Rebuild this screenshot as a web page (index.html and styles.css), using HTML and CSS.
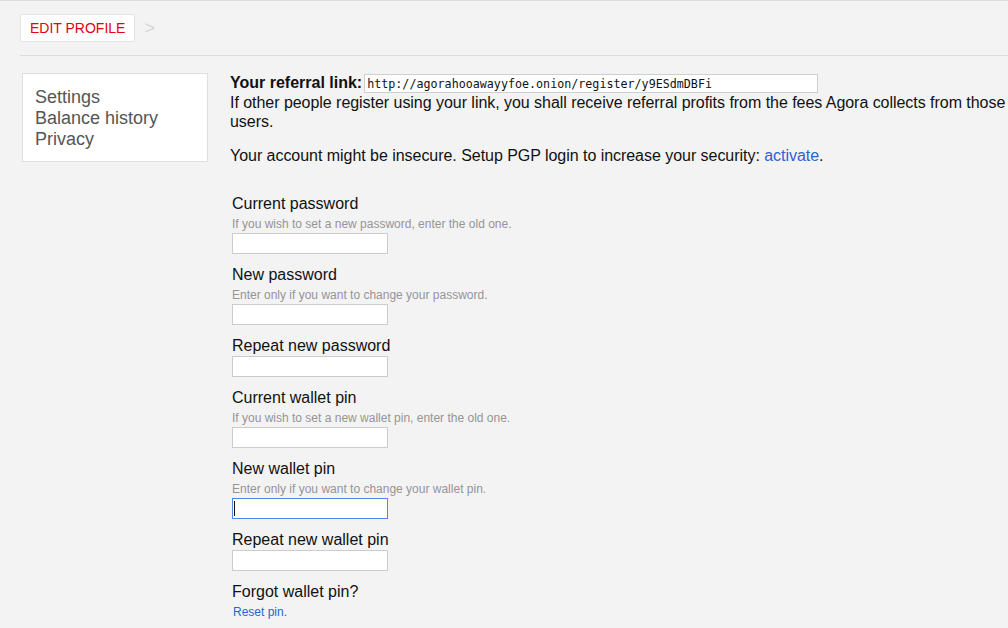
FILE: index.html
```html
<!DOCTYPE html>
<html lang="en">
<head>
<meta charset="utf-8">
<title>Edit profile</title>
<link rel="stylesheet" href="styles.css">
</head>
<body>
<div class="page">
  <div class="crumbs">
    <a class="crumb-btn" href="#">EDIT PROFILE</a>
    <span class="crumb-sep">&gt;</span>
  </div>
  <div class="rule"></div>
  <div class="layout">
    <nav class="sidenav">
      <a href="#">Settings</a>
      <a href="#">Balance history</a>
      <a href="#">Privacy</a>
    </nav>
    <main class="main">
      <div class="ref-row">
        <strong class="ref-label">Your referral link:</strong>
        <input class="ref-input" type="text" value="http://agorahooawayyfoe.onion/register/y9ESdmDBFi">
      </div>
      <p class="text">If other people register using your link, you shall receive referral profits from the fees Agora collects from those users.</p>
      <p class="text">Your account might be insecure. Setup PGP login to increase your security: <a class="link" href="#">activate</a>.</p>
      <form class="form">
        <div class="group">
          <div class="label">Current password</div>
          <div class="help">If you wish to set a new password, enter the old one.</div>
          <input class="field" type="password">
        </div>
        <div class="group">
          <div class="label">New password</div>
          <div class="help">Enter only if you want to change your password.</div>
          <input class="field" type="password">
        </div>
        <div class="group">
          <div class="label">Repeat new password</div>
          <input class="field" type="password">
        </div>
        <div class="group">
          <div class="label">Current wallet pin</div>
          <div class="help">If you wish to set a new wallet pin, enter the old one.</div>
          <input class="field" type="password">
        </div>
        <div class="group">
          <div class="label">New wallet pin</div>
          <div class="help">Enter only if you want to change your wallet pin.</div>
          <span class="field-wrap">
            <input class="field field-focus" type="password">
            <span class="caret"></span>
          </span>
        </div>
        <div class="group">
          <div class="label">Repeat new wallet pin</div>
          <input class="field" type="password">
        </div>
        <div class="group">
          <div class="label">Forgot wallet pin?</div>
          <a class="reset" href="#">Reset pin.</a>
        </div>
      </form>
    </main>
  </div>
</div>
</body>
</html>
```

FILE: styles.css
```css
html, body {
  margin: 0;
  padding: 0;
}
body {
  background: #f3f3f3;
  border-top: 1px solid #dcdcdc;
  font-family: "Liberation Sans", Arial, sans-serif;
  color: #111;
  overflow: hidden;
}
.page {
  padding: 13px 0 0 20px;
}
.crumbs {
  display: flex;
  align-items: center;
  height: 28px;
}
.crumb-btn {
  display: block;
  box-sizing: border-box;
  height: 28px;
  line-height: 26px;
  padding: 0 9px 0 9px;
  background: #fff;
  border: 1px solid #e4e4e4;
  border-radius: 2px;
  color: #e2000f;
  font-size: 14px;
  text-decoration: none;
}
.crumb-sep {
  margin-left: 9px;
  color: #d6d6d6;
  font-size: 18px;
  line-height: 20px;
}
.rule {
  height: 1px;
  background: #dcdcdc;
  margin-top: 13px;
}
.layout {
  display: flex;
  align-items: flex-start;
  margin-top: 17px;
}
.sidenav {
  box-sizing: border-box;
  flex: none;
  width: 186px;
  margin-left: 2px;
  padding: 13px 12px 11px 12px;
  background: #fff;
  border: 1px solid #dedede;
  display: flex;
  flex-direction: column;
}
.sidenav a {
  color: #555;
  font-size: 18px;
  line-height: 21px;
  text-decoration: none;
}
.main {
  margin-left: 22px;
  flex: none;
  width: 790px;
  margin-top: -0.5px;
}
.ref-row {
  display: flex;
  align-items: flex-start;
}
.ref-label {
  font-size: 16px;
  line-height: 19px;
  font-weight: bold;
}
.ref-input {
  box-sizing: border-box;
  margin: 1.5px 0 0 2px;
  width: 454px;
  height: 19px;
  padding: 0 2px;
  border: 1px solid #cfcfcf;
  background: #fff;
  font-family: "DejaVu Sans Mono", "Liberation Mono", monospace;
  font-size: 11.7px;
  color: #111;
  outline: none;
}
.text {
  margin: 0;
  font-size: 16px;
  line-height: 19px;
  letter-spacing: -0.04px;
}
.text + .text {
  margin-top: 15px;
}
.link {
  color: #2a63d4;
  text-decoration: none;
}
.form {
  margin: 29px 0 0 2px;
}
.group {
  display: flex;
  flex-direction: column;
  align-items: flex-start;
  margin-bottom: 11px;
}
.label {
  font-size: 16px;
  line-height: 20px;
}
.help {
  font-size: 12px;
  line-height: 18px;
  padding-top: 1px;
  color: #959595;
}
.field {
  display: block;
  box-sizing: border-box;
  width: 156px;
  height: 21px;
  margin: 0;
  padding: 0;
  border: 1px solid #cccccc;
  background: #fff;
  outline: none;
}
.field-wrap {
  position: relative;
  display: block;
}
.field-focus {
  border-color: #4d88e8;
}
.caret {
  position: absolute;
  left: 2px;
  top: 3px;
  width: 1px;
  height: 15px;
  background: #111;
}
.reset {
  margin-left: 1px;
  padding-top: 1px;
  font-size: 12px;
  line-height: 19px;
  color: #2a63d4;
  text-decoration: none;
}
```
